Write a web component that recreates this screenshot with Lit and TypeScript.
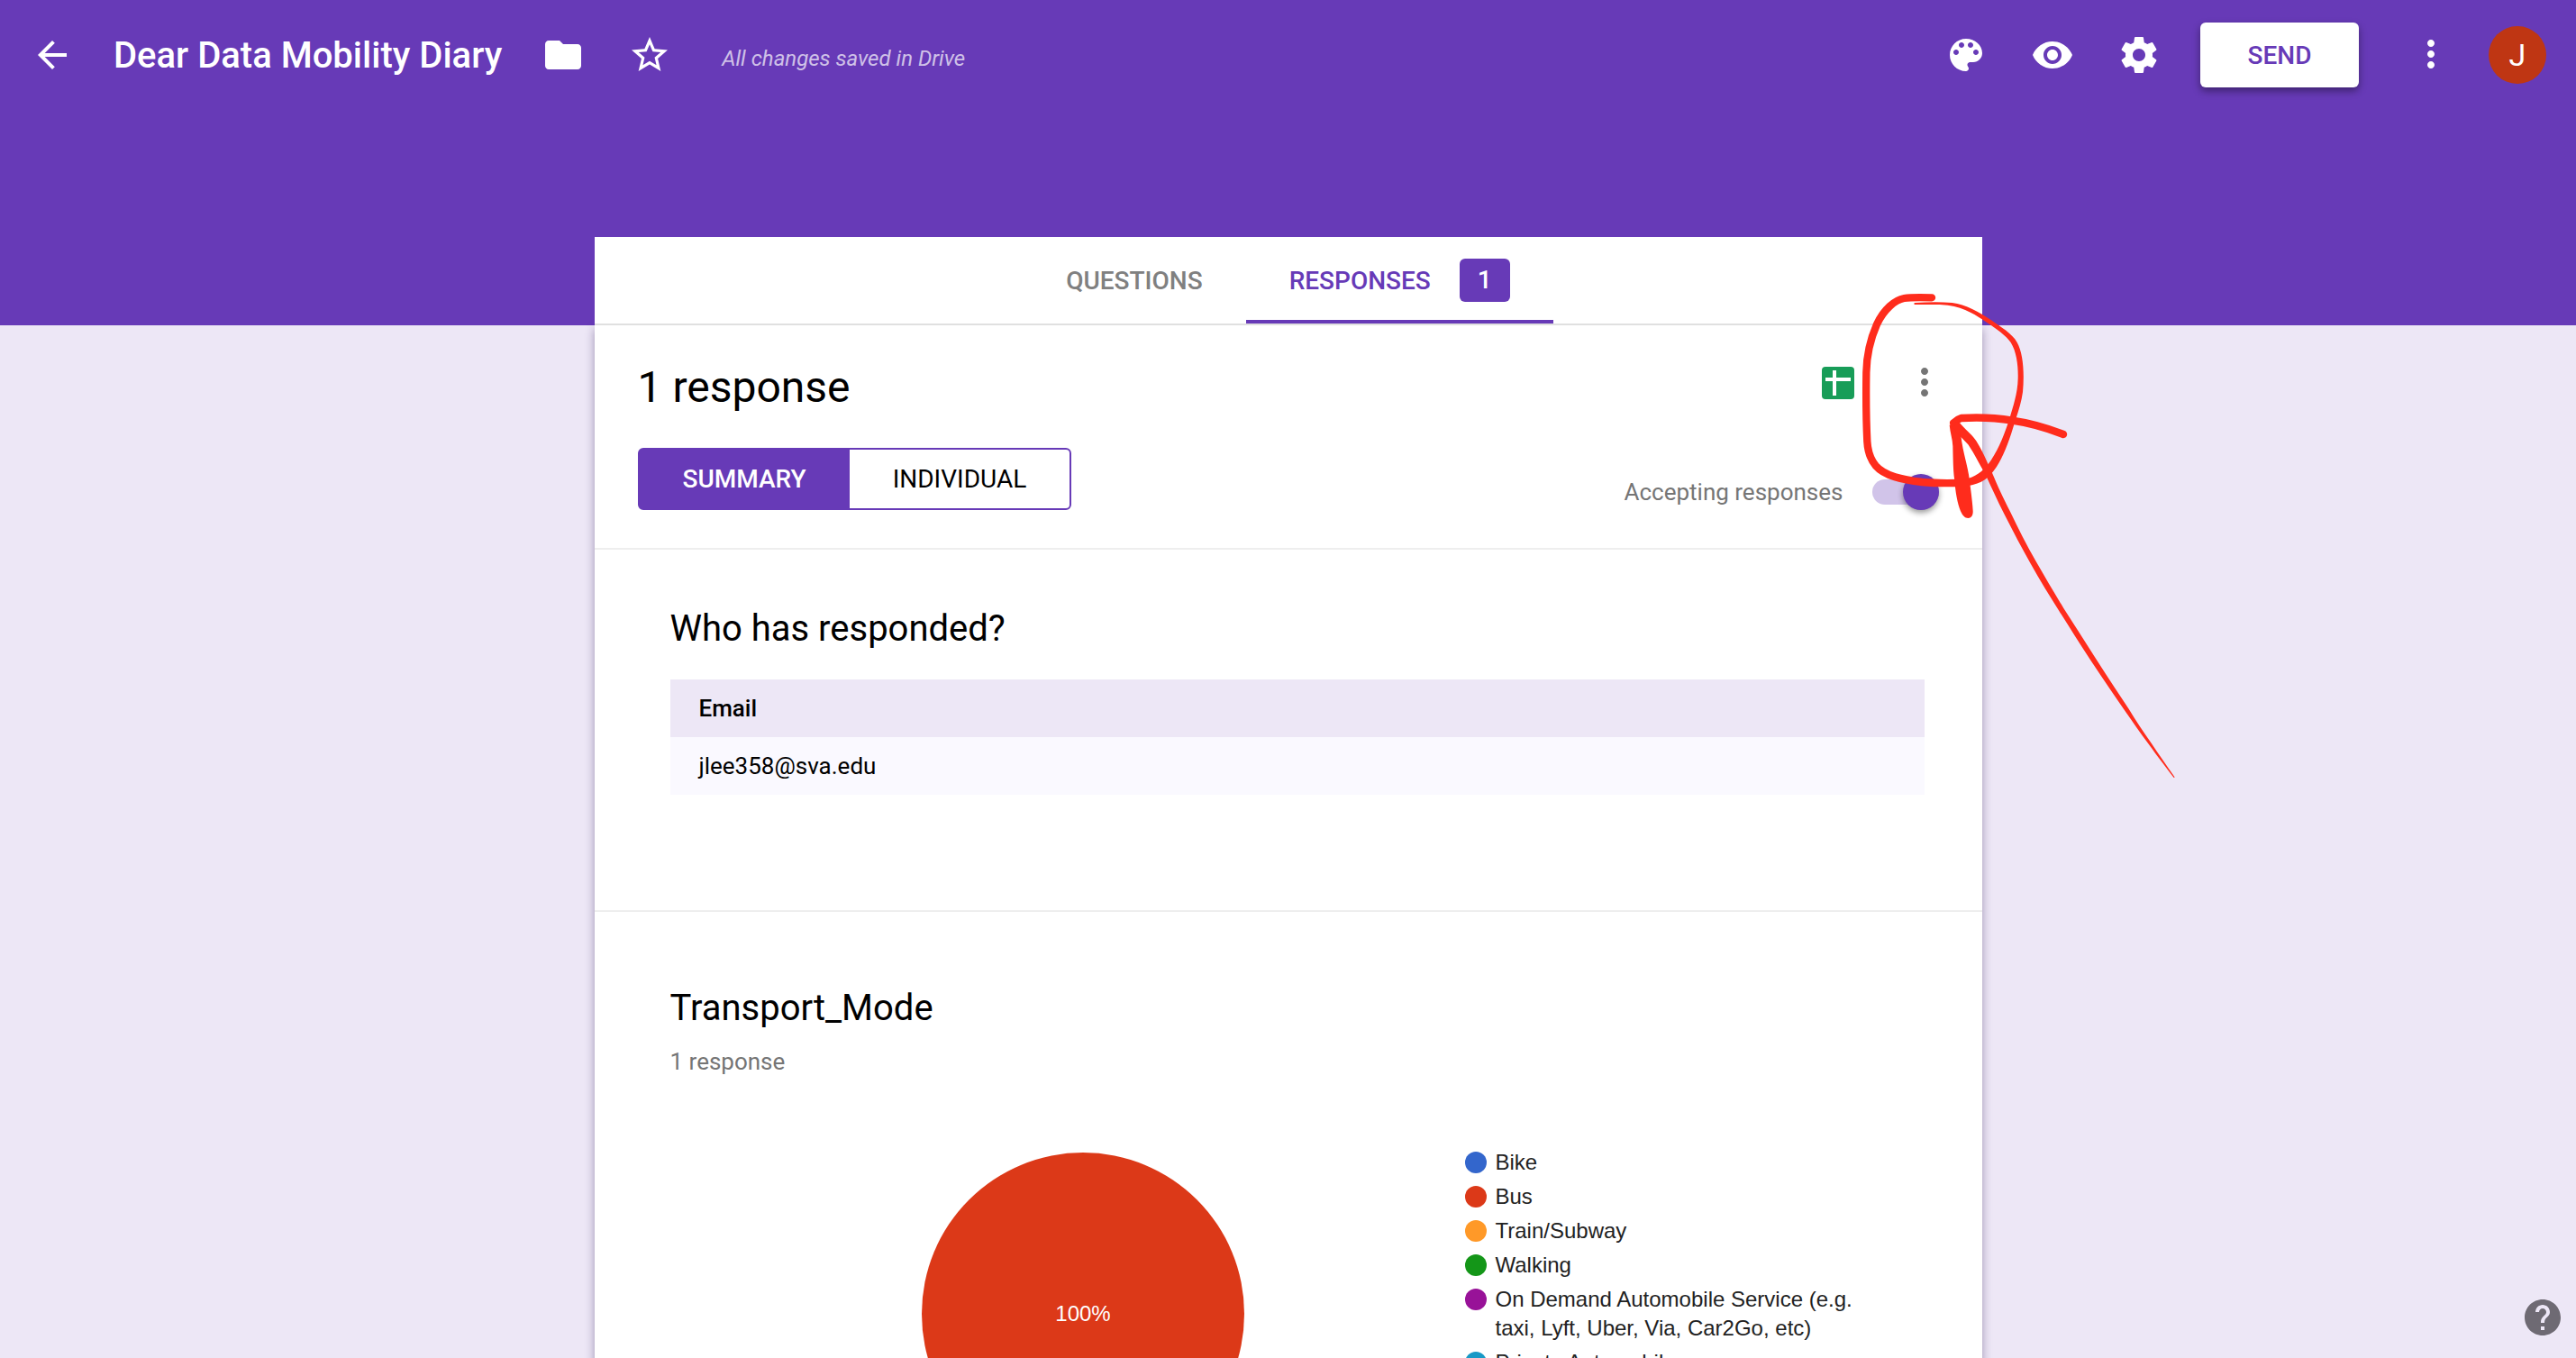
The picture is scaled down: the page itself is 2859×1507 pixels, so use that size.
import { LitElement, html, css, svg } from "lit";
import { customElement, state } from "lit/decorators.js";
import { classMap } from "lit/directives/class-map.js";
import { styleMap } from "lit/directives/style-map.js";

const icons = {
  back: svg`<path d="M20 11H7.83l5.59-5.59L12 4l-8 8 8 8 1.41-1.41L7.83 13H20v-2z"/>`,
  folder: svg`<path d="M10 4H4c-1.1 0-1.99.9-1.99 2L2 18c0 1.1.9 2 2 2h16c1.1 0 2-.9 2-2V8c0-1.1-.9-2-2-2h-8l-2-2z"/>`,
  star: svg`<path d="M22 9.24l-7.19-.62L12 2 9.19 8.63 2 9.24l5.46 4.73L5.82 21 12 17.27 18.18 21l-1.63-7.03L22 9.24zM12 15.4l-3.76 2.27 1-4.28-3.32-2.88 4.38-.38L12 6.1l1.71 4.04 4.38.38-3.32 2.88 1 4.28L12 15.4z"/>`,
  palette: svg`<path d="M12 3c-4.97 0-9 4.03-9 9s4.03 9 9 9c.83 0 1.5-.67 1.5-1.5 0-.39-.15-.74-.39-1.01-.23-.26-.38-.61-.38-.99 0-.83.67-1.5 1.5-1.5H16c2.76 0 5-2.24 5-5 0-4.42-4.03-8-9-8zm-5.5 9c-.83 0-1.5-.67-1.5-1.5S5.67 9 6.5 9 8 9.67 8 10.5 7.33 12 6.5 12zm3-4C8.67 8 8 7.33 8 6.5S8.67 5 9.5 5s1.5.67 1.5 1.5S10.33 8 9.5 8zm5 0c-.83 0-1.5-.67-1.5-1.5S13.67 5 14.5 5s1.5.67 1.5 1.5S15.33 8 14.5 8zm3 4c-.83 0-1.5-.67-1.5-1.5S16.67 9 17.5 9s1.5.67 1.5 1.5-.67 1.5-1.5 1.5z"/>`,
  eye: svg`<path d="M12 4.5C7 4.5 2.73 7.61 1 12c1.73 4.39 6 7.5 11 7.5s9.27-3.11 11-7.5c-1.73-4.39-6-7.5-11-7.5zM12 17c-2.76 0-5-2.24-5-5s2.24-5 5-5 5 2.24 5 5-2.24 5-5 5zm0-8c-1.66 0-3 1.34-3 3s1.34 3 3 3 3-1.34 3-3-1.34-3-3-3z"/>`,
  gear: svg`<path d="M19.43 12.98c.04-.32.07-.64.07-.98s-.03-.66-.07-.98l2.11-1.65c.19-.15.24-.42.12-.64l-2-3.46c-.12-.22-.39-.3-.61-.22l-2.49 1c-.52-.4-1.08-.73-1.69-.98l-.38-2.65C14.46 2.18 14.25 2 14 2h-4c-.25 0-.46.18-.49.42l-.38 2.65c-.61.25-1.17.59-1.69.98l-2.49-1c-.23-.09-.49 0-.61.22l-2 3.46c-.13.22-.07.49.12.64l2.11 1.65c-.04.32-.07.65-.07.98s.03.66.07.98l-2.11 1.65c-.19.15-.24.42-.12.64l2 3.46c.12.22.39.3.61.22l2.49-1c.52.4 1.08.73 1.69.98l.38 2.65c.03.24.24.42.49.42h4c.25 0 .46-.18.49-.42l.38-2.65c.61-.25 1.17-.59 1.69-.98l2.49 1c.23.09.49 0 .61-.22l2-3.46c.12-.22.07-.49-.12-.64l-2.11-1.65zM12 15.5c-1.93 0-3.5-1.57-3.5-3.5s1.57-3.5 3.5-3.5 3.5 1.57 3.5 3.5-1.57 3.5-3.5 3.5z"/>`,
  more: svg`<path d="M12 7.5c1.1 0 2-.9 2-2s-.9-2-2-2-2 .9-2 2 .9 2 2 2zm0 2c-1.1 0-2 .9-2 2s.9 2 2 2 2-.9 2-2-.9-2-2-2zm0 6c-1.1 0-2 .9-2 2s.9 2 2 2 2-.9 2-2-.9-2-2-2z"/>`,
  sheets: svg`<rect x="3" y="3" width="18" height="18" rx="2" fill="#189d58"/><path fill="#fff" d="M9 5h2v4h8v2h-8v8H9v-8H5V9h4z"/>`,
  help: svg`<path d="M12 2C6.48 2 2 6.48 2 12s4.48 10 10 10 10-4.48 10-10S17.52 2 12 2zm1 17h-2v-2h2v2zm2.07-7.75l-.9.92C13.45 12.9 13 13.5 13 15h-2v-.5c0-1.1.45-2.1 1.17-2.83l1.24-1.26c.37-.36.59-.86.59-1.41 0-1.1-.9-2-2-2s-2 .9-2 2H8c0-2.21 1.79-4 4-4s4 1.79 4 4c0 .88-.36 1.68-.93 2.25z"/>`,
};

const icon = (name: keyof typeof icons) =>
  html`<svg class="icon" viewBox="0 0 24 24" aria-hidden="true">${icons[name]}</svg>`;

const modes = [
  { label: "Bike", color: "#3366cc" },
  { label: "Bus", color: "#dc3918" },
  { label: "Train/Subway", color: "#ff9928" },
  { label: "Walking", color: "#149618" },
  { label: "On Demand Automobile Service (e.g. taxi, Lyft, Uber, Via, Car2Go, etc)", color: "#981298" },
  { label: "Private Automobile", color: "#1899c6" },
];

@customElement("app-root")
export class AppRoot extends LitElement {
  @state() private view = "Summary";
  @state() private accepting = true;

  static styles = css`
    * {
      box-sizing: border-box;
    }
    :host {
      --purple: #673ab7;
      display: block;
      height: 100vh;
      overflow: hidden;
      position: relative;
      background: linear-gradient(var(--purple) 361px, #ede7f6 361px);
      font-family: Roboto, "Liberation Sans", sans-serif;
      font-size: 26px;
      color: #000;
    }
    button {
      border: 0;
      padding: 0;
      background: none;
      font: inherit;
      color: inherit;
      cursor: pointer;
    }
    h1,
    h2,
    p,
    ul {
      margin: 0;
      padding: 0;
    }
    .icon {
      display: block;
      width: 48px;
      height: 48px;
      fill: currentColor;
    }
    .bar {
      display: flex;
      align-items: center;
      height: 122px;
      padding: 0 33px 0 34px;
      color: #fff;
    }
    .group {
      display: flex;
      align-items: center;
      gap: 48px;
    }
    .file {
      gap: 44px;
    }
    .title {
      padding-top: 2px;
      font-size: 40px;
      line-height: 48px;
      font-weight: 500;
    }
    .saved {
      margin-left: 56px;
      padding-top: 8px;
      font-size: 24px;
      line-height: 32px;
      font-style: italic;
      color: rgba(255, 255, 255, 0.7);
    }
    .tools {
      margin-left: auto;
    }
    .send {
      width: 176px;
      height: 72px;
      margin: 0 56px 0 44px;
      border-radius: 6px;
      background: #fff;
      color: var(--purple);
      font-size: 28px;
      font-weight: 500;
      box-shadow: 0 4px 8px rgba(0, 0, 0, 0.4);
    }
    .avatar {
      width: 64px;
      height: 64px;
      margin-left: 40px;
      border-radius: 50%;
      background: #bf3613;
      font-size: 34px;
    }
    .card {
      position: relative;
      width: 1540px;
      max-width: 100%;
      margin: 141px auto 0;
    }
    .tabs {
      position: relative;
      display: flex;
      justify-content: center;
      height: 98px;
      background: #fff;
      border-bottom: 2px solid #e0e0e0;
      font-size: 28px;
      font-weight: 500;
    }
    .tab {
      display: flex;
      align-items: center;
      gap: 32px;
      padding: 4px 48px 0;
      color: #808080;
      border-bottom: 4px solid transparent;
    }
    .tab.active {
      color: var(--purple);
      border-color: var(--purple);
    }
    .badge {
      width: 56px;
      line-height: 48px;
      border-radius: 6px;
      background: var(--purple);
      color: #fff;
    }
    .sheet {
      background: #fff;
      box-shadow: 0 4px 10px rgba(40, 20, 80, 0.4);
    }
    .head {
      display: grid;
      grid-template-columns: 1fr auto;
      grid-template-rows: 58px 69px;
      row-gap: 38px;
      padding: 40px 48px 42px;
      border-bottom: 2px solid #eee;
    }
    .count {
      font-size: 48px;
      line-height: 58px;
      font-weight: 400;
    }
    .actions {
      align-items: flex-start;
      justify-content: flex-end;
      margin-right: -8px;
      color: #757575;
    }
    .switcher {
      display: flex;
      justify-self: start;
      border: 2px solid var(--purple);
      border-radius: 6px;
      font-size: 28px;
    }
    .choice {
      padding: 0 48px;
    }
    .choice.active {
      background: var(--purple);
      color: #fff;
      font-weight: 500;
    }
    .accept {
      display: flex;
      align-items: center;
      align-self: end;
      gap: 32px;
      height: 40px;
      color: #757575;
    }
    .toggle {
      appearance: none;
      display: flex;
      align-items: center;
      width: 74px;
      height: 28px;
      margin: 0;
      border-radius: 14px;
      background: #d1c4e9;
    }
    .toggle::before {
      content: "";
      width: 40px;
      height: 40px;
      border-radius: 50%;
      background: #fff;
      box-shadow: 0 3px 6px rgba(0, 0, 0, 0.4);
    }
    .toggle:checked::before {
      margin-left: auto;
      background: var(--purple);
    }
    .section {
      padding: 64px 64px 128px 84px;
      border-bottom: 2px solid #eee;
    }
    .question {
      padding-top: 83px;
    }
    .heading {
      font-size: 40px;
      line-height: 48px;
      font-weight: 400;
    }
    .people {
      width: 100%;
      margin-top: 32px;
      border-collapse: collapse;
      text-align: left;
    }
    .people th,
    .people td {
      height: 64px;
      padding: 0 32px;
    }
    .people th {
      background: #ede7f6;
      font-weight: 500;
    }
    .people td {
      background: #faf9ff;
    }
    .note {
      margin-top: 19px;
      line-height: 32px;
      color: #757575;
    }
    .chart {
      display: flex;
      align-items: flex-start;
      gap: 245px;
      margin-top: 80px;
      padding-left: 279px;
      font-family: "Liberation Sans", Arial, sans-serif;
      font-size: 24px;
      line-height: 32px;
    }
    .pie {
      flex: none;
      width: 358px;
      height: 363px;
      padding-top: 5px;
    }
    .share {
      fill: #fff;
      text-anchor: middle;
    }
    .legend {
      display: grid;
      gap: 6px;
      max-width: 460px;
      list-style: none;
      color: #222;
    }
    .entry {
      display: flex;
      gap: 10px;
    }
    .swatch {
      flex: none;
      width: 24px;
      height: 24px;
      margin-top: 4px;
      border-radius: 50%;
    }
    .marks {
      position: absolute;
      left: 1390px;
      top: 57px;
      width: 400px;
      height: 560px;
      fill: #ff2c1c;
      pointer-events: none;
    }
    .stroke {
      fill: none;
      stroke: #ff2c1c;
      stroke-width: 25;
      stroke-linecap: round;
      stroke-linejoin: round;
    }
    .help {
      position: absolute;
      right: 13px;
      bottom: 21px;
      color: #6e6a73;
    }
  `;

  private renderBar() {
    return html`<header class="bar">
      <div class="group file">
        <button aria-label="Back">${icon("back")}</button>
        <h1 class="title">Dear Data Mobility Diary</h1>
        <div class="group">
          <button aria-label="Move to folder">${icon("folder")}</button>
          <button aria-label="Star">${icon("star")}</button>
        </div>
      </div>
      <span class="saved">All changes saved in Drive</span>
      <div class="group tools">
        <button aria-label="Color palette">${icon("palette")}</button>
        <button aria-label="Preview">${icon("eye")}</button>
        <button aria-label="Settings">${icon("gear")}</button>
      </div>
      <button class="send">SEND</button>
      <button aria-label="More">${icon("more")}</button>
      <button class="avatar">J</button>
    </header>`;
  }

  private renderHead() {
    return html`<div class="head">
      <h2 class="count">1 response</h2>
      <div class="group actions">
        <button aria-label="Create spreadsheet">${icon("sheets")}</button>
        <button aria-label="Response options">${icon("more")}</button>
      </div>
      <div class="switcher">
        ${["Summary", "Individual"].map(
          (name) => html`<button
            class=${classMap({ choice: true, active: this.view === name })}
            aria-pressed=${this.view === name}
            @click=${() => (this.view = name)}
          >
            ${name.toUpperCase()}
          </button>`
        )}
      </div>
      <label class="accept" for="accepting">
        Accepting responses
        <input
          id="accepting"
          class="toggle"
          type="checkbox"
          .checked=${this.accepting}
          @change=${() => (this.accepting = !this.accepting)}
        />
      </label>
    </div>`;
  }

  private renderChart() {
    return html`<div class="chart">
      <svg class="pie" viewBox="0 0 358 358">
        <circle cx="179" cy="179" r="179" fill="#dc3918" />
        <text class="share" x="179" y="187">100%</text>
      </svg>
      <ul class="legend">
        ${modes.map(
          (m) => html`<li class="entry">
            <span class="swatch" style=${styleMap({ background: m.color })}></span>
            <span>${m.label}</span>
          </li>`
        )}
      </ul>
    </div>`;
  }

  private renderMarks() {
    return html`<svg class="marks" viewBox="0 0 1200 1680" aria-hidden="true">
      <path class="stroke" d="M282 31C250 30 215 29 190 33C160 38 122 70 99 120C78 168 65 225 64 280C63 350 63 430 67 510C69 545 77 568 95 590C125 625 185 637 250 645C290 649 330 649 370 648"/>
      <path d="M365 661C420 660 455 645 477 621C520 575 545 490 560 440C572 405 581 375 585 345C591 280 586 215 566 180C550 150 510 128 480 106C440 78 395 54 350 48C310 45 265 46 225 48Q221 51 225 54C265 55 300 53 335 56C395 64 430 90 465 113C495 133 530 157 545 180C565 212 570 260 569 300C568 350 552 395 542 430C520 500 495 560 455 602C430 625 405 637 365 637Z"/>
      <path class="stroke" d="M720 486C660 463 600 447 550 440C490 430 430 429 380 432Q366 436 354 448"/>
      <path d="M341 455C343 480 351 500 352 525C353 570 353 610 358 640C361 680 367 715 378 742C385 758 393 765 403 765C414 764 420 755 419 740C417 705 410 660 408 640C402 590 386 550 379 490L375 440Z"/>
      <path d="M352 462C365 482 385 500 403 520C425 552 440 585 460 618C482 665 500 705 523 751C553 810 580 862 612 918C642 972 673 1022 706 1074C741 1130 776 1184 812 1240C850 1298 888 1352 925 1406C952 1445 978 1482 1003 1516C1035 1560 1060 1593 1088 1629Q1091 1630 1090 1626C1064 1588 1038 1552 1011 1511C985 1474 960 1437 938 1400C900 1344 864 1288 827 1231C792 1175 756 1120 721 1065C690 1014 660 963 629 909C598 854 570 800 543 743C520 698 502 660 482 612C465 575 450 540 430 508C410 480 395 472 372 445Z"/>
    </svg>`;
  }

  render() {
    return html`
      ${this.renderBar()}
      <main class="card">
        <nav class="tabs">
          <button class="tab">QUESTIONS</button>
          <button class="tab active">RESPONSES <span class="badge">1</span></button>
        </nav>
        <div class="sheet">
          ${this.renderHead()}
          <section class="section">
            <h2 class="heading">Who has responded?</h2>
            <table class="people">
              <thead>
                <tr><th scope="col">Email</th></tr>
              </thead>
              <tbody>
                <tr><td>jlee358@sva.edu</td></tr>
              </tbody>
            </table>
          </section>
          <section class="section question">
            <h2 class="heading">Transport_Mode</h2>
            <p class="note">1 response</p>
            ${this.renderChart()}
          </section>
        </div>
        ${this.renderMarks()}
      </main>
      <button class="help" aria-label="Help">${icon("help")}</button>
    `;
  }
}
